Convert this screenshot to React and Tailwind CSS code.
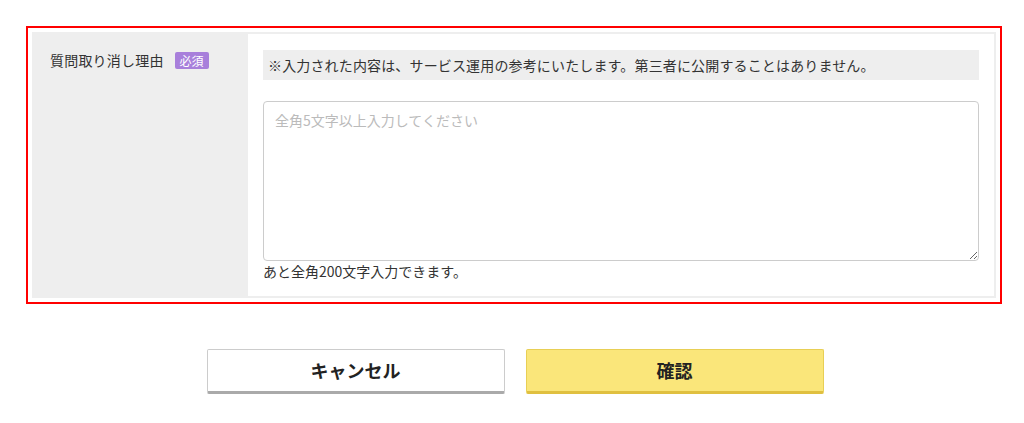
import React, { useState } from 'react';

export default function App() {
  const [reason, setReason] = useState('');
  const remaining = 200 - reason.length;

  return (
    <div className="min-h-[423px] bg-white pt-[26px] font-['Noto_Sans_CJK_JP','Noto_Sans',sans-serif] text-[#333]">
      {/* Form frame */}
      <div className="ml-[26px] w-[976px] border-2 border-[#ff0000] p-[4px]">
        <div className="flex border-2 border-[#eeeeee]">
          <div className="flex w-[214px] shrink-0 items-start gap-[11px] bg-[#eeeeee] pl-[16px] pt-[16px]">
            <span className="text-[14px] leading-[20px] tracking-[0.2px]">質問取り消し理由</span>
            <span className="mt-[2px] rounded-[2px] bg-[#a87fdb] px-[5px] text-[12px] leading-[17px] text-white">必須</span>
          </div>
          <div className="flex-1 px-[15px] pt-[16px] pb-[15px]">
            <div className="bg-[#eeeeee] px-[5px] text-[14px] leading-[30px] tracking-[0.15px]">
              ※入力された内容は、サービス運用の参考にいたします。第三者に公開することはありません。
            </div>
            <textarea
              value={reason}
              onChange={e => setReason(e.target.value)}
              placeholder="全角5文字以上入力してください"
              className="mt-[21px] block h-[160px] w-full resize-y rounded-[4px] border border-[#cccccc] px-[11px] py-[8px] text-[14px] leading-[20px] placeholder:text-[#bbbbbb] focus:outline-none"
            />
            <p className="text-[14px] leading-[20px]">あと全角{remaining}文字入力できます。</p>
          </div>
        </div>
      </div>

      {/* Buttons */}
      <div className="mt-[45px] flex justify-center gap-[21px] pl-[6px]">
        <button className="h-[45px] w-[298px] rounded-[2px] border border-[#cccccc] border-b-[3px] border-b-[#aaaaaa] bg-white text-[18px] font-bold text-[#222]">
          キャンセル
        </button>
        <button className="h-[45px] w-[298px] rounded-[2px] border border-[#e8cf55] border-b-[3px] border-b-[#e0c040] bg-[#fae67a] text-[18px] font-bold text-[#222]">
          確認
        </button>
      </div>
    </div>
  );
}
